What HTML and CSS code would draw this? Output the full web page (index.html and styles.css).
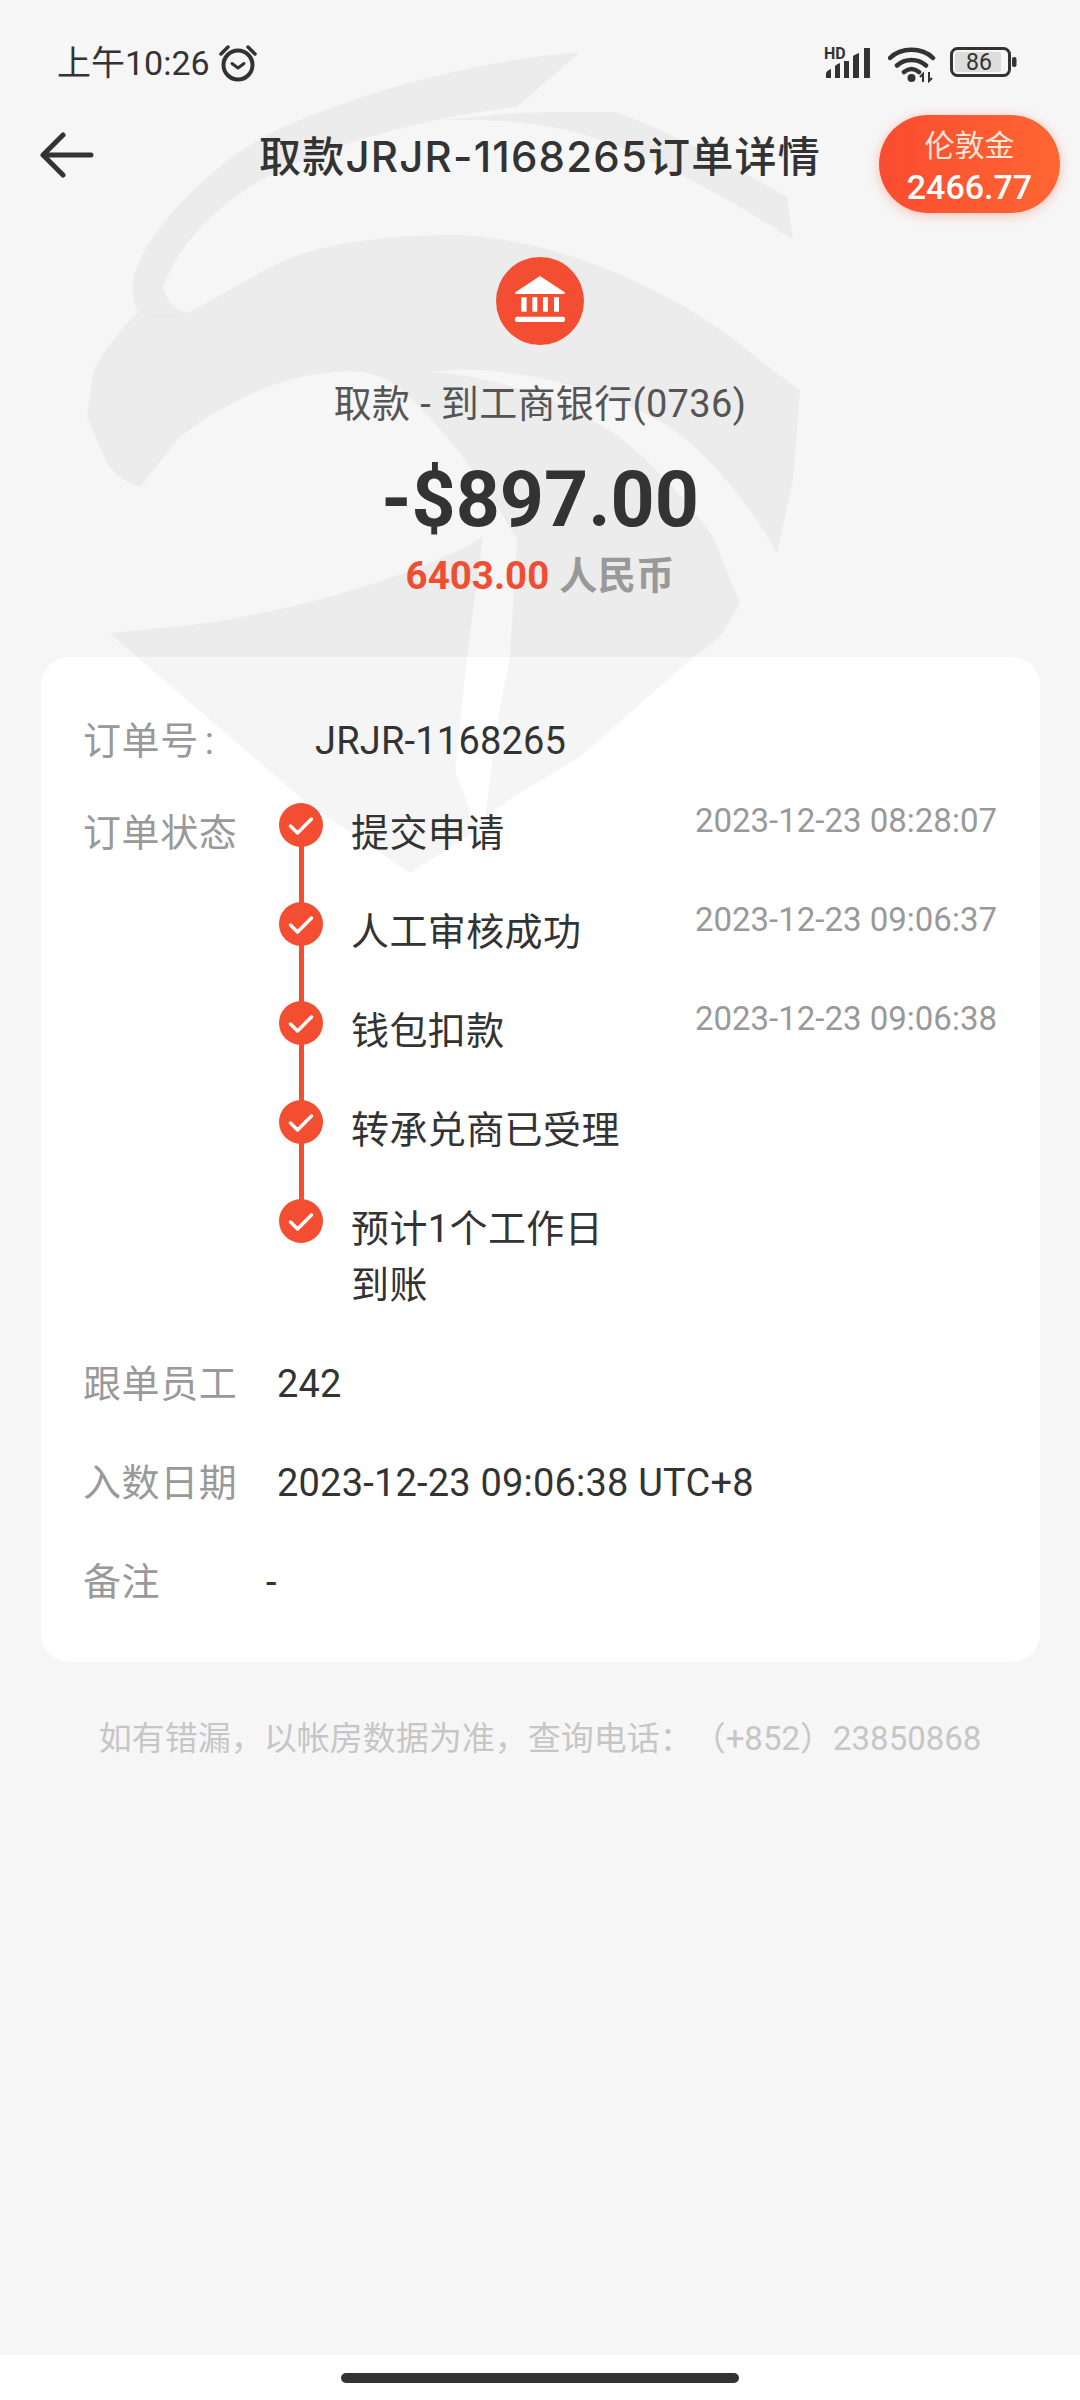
FILE: index.html
```html
<!DOCTYPE html>
<html lang="zh-CN">
<head>
<meta charset="utf-8">
<title>订单详情</title>
<link rel="stylesheet" href="styles.css">
</head>
<body>
<div class="page">
  <svg class="watermark" viewBox="0 0 1080 1000" width="1080" height="1000" aria-hidden="true">
    <path d="M580 52L517 107C470 112 360 130 265 178C215 205 175 250 163 287L167 297C170 305 178 310 187 313L138 312C132 300 130 285 137 267C155 220 225 150 293 123C370 90 480 60 580 52Z"/>
    <path d="M440 120L517 113L560 112L613 112C660 125 740 170 787 197L793 240C740 205 660 160 600 140C560 125 500 118 440 120Z"/>
    <path d="M187 313C215 300 260 270 293 257C340 240 400 235 460 235C560 240 680 290 763 363L800 390L793 480L777 553C750 505 720 470 687 440C640 400 520 360 430 372C490 375 570 400 623 440C660 470 690 505 713 537L740 603L720 637L690 660L580 757L513 797L485 818L500 707L510 657L517 540C490 490 440 420 393 383C370 370 350 370 327 373C280 375 210 410 177 440L140 487C125 482 115 475 107 463L87 417L93 373C100 355 120 330 138 312Z"/>
    <path d="M110 633C160 628 210 625 260 613C310 605 430 570 483 537L467 657L455 770L477 830L410 873L307 803L137 657Z"/>
  </svg>

  <div class="status">
    <div class="status-left">
      <span class="clock">上午10:26</span>
      <svg class="alarm" viewBox="0 0 40 38" width="40" height="38">
        <circle cx="20" cy="21" r="14.5" fill="none" stroke="#333" stroke-width="4"/>
        <path d="M14 19.5l6 4.5 6-4.5" fill="none" stroke="#333" stroke-width="3" stroke-linecap="round" stroke-linejoin="round"/>
        <path d="M3 10L10 3M37 10L30 3" fill="none" stroke="#333" stroke-width="3.5" stroke-linecap="round"/>
      </svg>
    </div>
    <div class="status-right">
      <svg class="signal" viewBox="0 0 50 32" width="50" height="32">
        <text class="hd" x="0" y="12">HD</text>
        <path d="M2 31v-4q0-3 5-5v9zM11 31V19q2-2 5-3v15zM20 31V14h5v17zM29 31V9q3-2 6-3v25zM40 31V1h6v30z" fill="#333"/>
      </svg>
      <svg viewBox="0 0 48 36" width="48" height="36">
        <path d="M2 11C13 0 34 0 45 11M9 18.500C17 11 30 11 38 18.500M16 25C21 21 26 21 31 25" fill="none" stroke="#333" stroke-width="4.500" stroke-linecap="round"/>
        <circle cx="23.500" cy="31" r="4" fill="#333"/>
        <path d="M35 35v-8l-3 3M41 25v9l3-3" fill="none" stroke="#333" stroke-width="2"/>
      </svg>
      <svg viewBox="0 0 67 30" width="67" height="30">
        <rect x="1.500" y="1.500" width="58" height="27" rx="6" fill="none" stroke="#333" stroke-width="3"/>
        <rect x="5" y="5" width="46" height="20" rx="2" fill="#dcdcdc"/>
        <rect x="62" y="10" width="4.500" height="10" rx="2" fill="#333"/>
        <text class="batt" x="29" y="23" text-anchor="middle">86</text>
      </svg>
    </div>
  </div>

  <header class="header">
    <svg class="back" viewBox="0 0 54 46" width="54" height="46">
      <path d="M3 23H51M23 3L3 23L23 43" fill="none" stroke="#333" stroke-width="5" stroke-linecap="round" stroke-linejoin="round"/>
    </svg>
    <h1 class="title">取款JRJR-1168265订单详情</h1>
    <div class="pill">
      <span class="pill-label">伦敦金</span>
      <span class="pill-value">2466.77</span>
    </div>
  </header>

  <section class="summary">
    <div class="bank">
      <svg viewBox="0 0 88 88" width="88" height="88">
        <path d="M44 19L69 35.500Q69 37 67 37H21Q19 37 19 35.500Z" fill="#fff"/>
        <path d="M25.300 40.300h5.300v14.400h-5.300zM36.300 40.300h5v14.400h-5zM47 40.300h5v14.400h-5zM58 40.300h5v14.400h-5z" fill="#fff"/>
        <rect x="19" y="59.700" width="50" height="5.300" rx="2" fill="#fff"/>
      </svg>
    </div>
    <p class="sub">取款 - 到工商银行(0736)</p>
    <p class="amount">-$897.00</p>
    <p class="cny"><span class="cny-num">6403.00</span> <span class="cny-unit">人民币</span></p>
  </section>

  <main class="card">
    <div class="row row-order">
      <span class="label label-order">订单号<span class="colon">:</span></span>
      <span class="value">JRJR-1168265</span>
    </div>
    <div class="row">
      <span class="label label-status">订单状态</span>
      <ol class="steps">
        <li class="step">
          <svg class="dot" viewBox="0 0 44 44" width="44" height="44"><circle cx="22" cy="22" r="22"/><path d="M11.500 23l7 7L32.500 16"/></svg>
          <span class="step-text">提交申请</span>
          <span class="step-time">2023-12-23 08:28:07</span>
        </li>
        <li class="step">
          <svg class="dot" viewBox="0 0 44 44" width="44" height="44"><circle cx="22" cy="22" r="22"/><path d="M11.500 23l7 7L32.500 16"/></svg>
          <span class="step-text">人工审核成功</span>
          <span class="step-time">2023-12-23 09:06:37</span>
        </li>
        <li class="step">
          <svg class="dot" viewBox="0 0 44 44" width="44" height="44"><circle cx="22" cy="22" r="22"/><path d="M11.500 23l7 7L32.500 16"/></svg>
          <span class="step-text">钱包扣款</span>
          <span class="step-time">2023-12-23 09:06:38</span>
        </li>
        <li class="step">
          <svg class="dot" viewBox="0 0 44 44" width="44" height="44"><circle cx="22" cy="22" r="22"/><path d="M11.500 23l7 7L32.500 16"/></svg>
          <span class="step-text">转承兑商已受理</span>
        </li>
        <li class="step">
          <svg class="dot" viewBox="0 0 44 44" width="44" height="44"><circle cx="22" cy="22" r="22"/><path d="M11.500 23l7 7L32.500 16"/></svg>
          <span class="step-text">预计1个工作日到账</span>
        </li>
      </ol>
    </div>
    <div class="row">
      <span class="label">跟单员工</span>
      <span class="value">242</span>
    </div>
    <div class="row">
      <span class="label">入数日期</span>
      <span class="value">2023-12-23 09:06:38 UTC+8</span>
    </div>
    <div class="row">
      <span class="label label-note">备注</span>
      <span class="value">-</span>
    </div>
  </main>

  <p class="notice">如有错漏，以帐房数据为准，查询电话：（+852）23850868</p>

  <div class="home"><span class="home-bar"></span></div>
</div>
</body>
</html>
```

FILE: styles.css
```css
* { box-sizing: border-box; }

html, body {
  margin: 0;
  padding: 0;
}

body {
  font-family: Roboto, "Noto Sans CJK SC", sans-serif;
  color: #333;
  background: #f6f6f6;
}

.page {
  position: relative;
  width: 1080px;
  height: 2400px;
  display: flex;
  flex-direction: column;
  background: #f6f6f6;
  overflow: hidden;
}

.watermark {
  position: absolute;
  top: 0;
  left: 0;
  z-index: 1;
  fill: #000;
  opacity: 0.035;
  pointer-events: none;
}

.status,
.header,
.summary,
.card > * {
  position: relative;
  z-index: 2;
}

.status {
  height: 110px;
  flex: none;
  padding: 43px 63px 0 57px;
  display: flex;
  justify-content: space-between;
  align-items: flex-start;
}

.status-left {
  display: flex;
  align-items: flex-start;
  gap: 8px;
}

.clock {
  font-size: 34px;
  line-height: 40px;
  white-space: nowrap;
}

.alarm { margin-top: 1px; }

.status-right {
  display: flex;
  align-items: flex-start;
  padding-top: 4px;
  gap: 14px;
}

.status-right svg { display: block; }

.signal { overflow: visible; }

.hd {
  font: 700 16px Roboto, sans-serif;
  fill: #333;
}

.batt {
  font: 400 23px Roboto, sans-serif;
  fill: #333;
}

.header {
  flex: none;
  height: 110px;
  padding: 5px 20px 0;
  display: grid;
  grid-template-columns: 1fr auto 1fr;
  align-items: start;
}

.back {
  display: block;
  margin: 17px 0 0 20px;
}

.title {
  margin: 15px 0 0;
  font-family: Inter, "Noto Sans CJK SC", sans-serif;
  font-size: 42px;
  line-height: 54px;
  font-weight: 500;
  letter-spacing: 1.2px;
  color: #333;
  white-space: nowrap;
}

.pill {
  justify-self: end;
  width: 181px;
  height: 98px;
  border-radius: 49px;
  background: linear-gradient(90deg, #fa4c30, #ff6632);
  box-shadow: 0 2px 12px rgba(255, 90, 50, 0.35);
  color: #fff;
  display: flex;
  flex-direction: column;
  align-items: center;
}

.pill-label {
  margin-top: 13px;
  font-size: 30px;
  line-height: 36px;
  color: #ffe6dc;
}

.pill-value {
  margin-top: 3px;
  font-size: 34px;
  line-height: 40px;
  font-weight: 500;
}

.summary {
  flex: none;
  padding-top: 37px;
  display: flex;
  flex-direction: column;
  align-items: center;
}

.bank {
  width: 88px;
  height: 88px;
  border-radius: 50%;
  background: #f44e32;
}

.bank svg { display: block; }

.sub {
  margin: 31px 0 0;
  font-size: 38px;
  letter-spacing: 0.35px;
  line-height: 56px;
  color: #555;
}

.amount {
  margin: 23px 0 0;
  font-size: 77px;
  line-height: 90px;
  font-weight: 700;
  color: #333;
}

.cny {
  margin: 6px 0 0;
  font-size: 38.500px;
  line-height: 50px;
  font-weight: 700;
}

.cny-num { color: #f04e32; }
.cny-unit { color: #999; }

.card {
  flex: none;
  margin: 56px 40px 0 41px;
  padding: 56px 43px 52px 42px;
  border-radius: 28px;
  background: #fff;
  display: flex;
  flex-direction: column;
  gap: 43px;
}

.row {
  display: flex;
  align-items: flex-start;
  font-size: 38px;
  line-height: 56px;
}

.row-order { margin-bottom: -7px; }

.label {
  flex: none;
  width: 194px;
  color: #999;
  letter-spacing: 0.6px;
}

.label-order { width: 232px; }
.label-status { width: 196px; }
.label-note { width: 183px; }

.colon { margin-left: 6px; }

.value {
  color: #333;
  letter-spacing: 0.2px;
  white-space: nowrap;
}

.steps {
  flex: 1;
  margin: 0;
  padding: 0;
  list-style: none;
  display: flex;
  flex-direction: column;
}

.step {
  position: relative;
  min-height: 99px;
  display: flex;
  align-items: flex-start;
  gap: 28px;
}

.step:last-child { min-height: 0; }

.step:not(:last-child)::after {
  content: "";
  position: absolute;
  left: 19.5px;
  top: 40px;
  width: 5px;
  height: 58px;
  background: #f44e32;
}

.dot {
  flex: none;
  display: block;
  margin-top: -2px;
  overflow: visible;
  position: relative;
  z-index: 1;
}

.dot circle { fill: #f44e32; }

.dot path {
  fill: none;
  stroke: #fff;
  stroke-width: 3.5;
  stroke-linecap: round;
  stroke-linejoin: round;
}

.step-text {
  width: 272px;
  flex: none;
  color: #333;
  letter-spacing: 0.4px;
}

.step-time {
  margin-left: auto;
  font-size: 33px;
  line-height: 32px;
  letter-spacing: 0;
  color: #999;
  white-space: nowrap;
}

.notice {
  margin: 49px 0 0;
  flex: none;
  text-align: center;
  font-size: 33px;
  line-height: 56px;
  color: #c6c6c6;
  white-space: nowrap;
  text-spacing-trim: space-all;
}

.home {
  margin-top: auto;
  flex: none;
  height: 45px;
  background: #fff;
  display: flex;
  justify-content: center;
  padding-top: 18px;
}

.home-bar {
  width: 398px;
  height: 10px;
  border-radius: 5px;
  background: #333;
}
```
